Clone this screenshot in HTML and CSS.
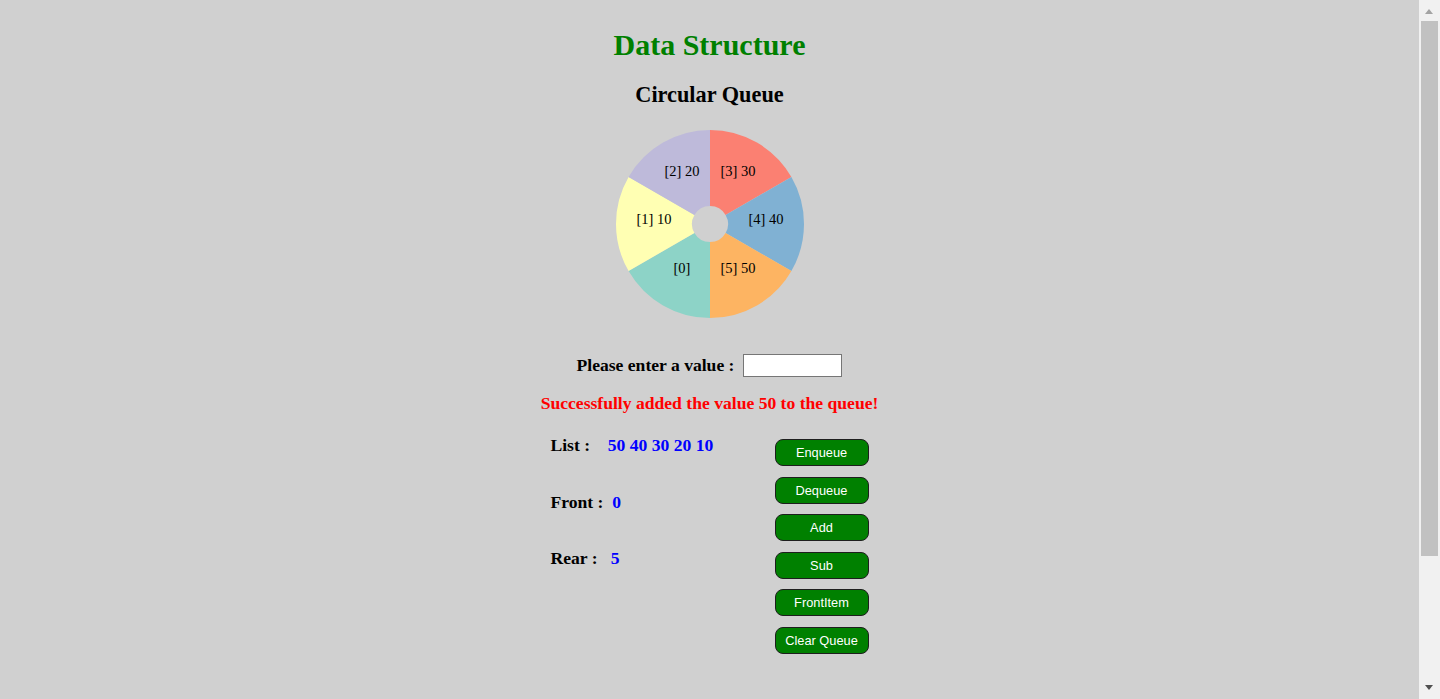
FILE: index.html
```html
<!DOCTYPE html>
<html lang="en">
<head>
<meta charset="utf-8">
<title>Data Structure - Circular Queue</title>
<link rel="stylesheet" href="styles.css">
</head>
<body>
<div class="page">
  <h1 class="title">Data Structure</h1>
  <h2 class="subtitle">Circular Queue</h2>
  <svg class="pie" width="200" height="200" viewBox="0 0 200 200">
    <path fill="#fb8072" d="M100,6 A94,94 0 0 1 181.41,53 L115.59,91 A18,18 0 0 0 100,82 Z"/>
    <path fill="#80b1d3" d="M181.41,53 A94,94 0 0 1 181.41,147 L115.59,109 A18,18 0 0 0 115.59,91 Z"/>
    <path fill="#fdb462" d="M181.41,147 A94,94 0 0 1 100,194 L100,118 A18,18 0 0 0 115.59,109 Z"/>
    <path fill="#8dd3c7" d="M100,194 A94,94 0 0 1 18.59,147 L84.41,109 A18,18 0 0 0 100,118 Z"/>
    <path fill="#ffffb3" d="M18.59,147 A94,94 0 0 1 18.59,53 L84.41,91 A18,18 0 0 0 84.41,109 Z"/>
    <path fill="#bebada" d="M18.59,53 A94,94 0 0 1 100,6 L100,82 A18,18 0 0 0 84.41,91 Z"/>
    <text class="slice-label" x="128" y="51.5">[3] 30</text>
    <text class="slice-label" x="156" y="100">[4] 40</text>
    <text class="slice-label" x="128" y="148.5">[5] 50</text>
    <text class="slice-label" x="72" y="148.5">[0]</text>
    <text class="slice-label" x="44" y="100">[1] 10</text>
    <text class="slice-label" x="72" y="51.5">[2] 20</text>
  </svg>
  <div class="input-row">
    <label class="input-label" for="val">Please enter a value :</label>
    <input class="value-input" id="val" type="text">
  </div>
  <p class="message">Successfully added the value 50 to the queue!</p>
  <div class="panel">
    <div class="info">
      <div class="info-row"><span class="info-label">List :&nbsp;&nbsp;&nbsp;&nbsp;</span><span class="info-value">50 40 30 20 10</span></div>
      <div class="info-row"><span class="info-label">Front :&nbsp;&nbsp;</span><span class="info-value">0</span></div>
      <div class="info-row"><span class="info-label">Rear :&nbsp;&nbsp;&nbsp;</span><span class="info-value">5</span></div>
    </div>
    <div class="buttons">
      <button class="btn" type="button">Enqueue</button>
      <button class="btn" type="button">Dequeue</button>
      <button class="btn" type="button">Add</button>
      <button class="btn" type="button">Sub</button>
      <button class="btn" type="button">FrontItem</button>
      <button class="btn" type="button">Clear Queue</button>
    </div>
  </div>
</div>
<div class="scrollbar" aria-hidden="true">
  <div class="scroll-arrow scroll-up"></div>
  <div class="scroll-thumb"></div>
  <div class="scroll-arrow scroll-down"></div>
</div>
</body>
</html>
```

FILE: styles.css
```css
html {
  background: #d0d0d0;
}

body {
  margin: 0;
  min-height: 858px;
  background: #d0d0d0;
  font-family: "Liberation Serif", "Times New Roman", serif;
  color: #000;
}

.page {
  display: flex;
  flex-direction: column;
  align-items: center;
  padding-top: 27px;
  padding-right: 21px;
}

.title {
  margin: 0;
  font-size: 30px;
  line-height: 36px;
  font-weight: bold;
  color: #008000;
}

.subtitle {
  margin: 19px 0 0;
  font-size: 22.3px;
  line-height: 26px;
  font-weight: bold;
}

.pie {
  display: block;
  margin-top: 16px;
}

.slice-label {
  font-family: "Liberation Serif", "Times New Roman", serif;
  font-size: 14.5px;
  fill: #000;
  text-anchor: middle;
}

.input-row {
  display: flex;
  align-items: center;
  margin-top: 30px;
  height: 23px;
}

.input-label {
  font-size: 17.6px;
  font-weight: bold;
  line-height: 23px;
}

.value-input {
  box-sizing: border-box;
  width: 99px;
  height: 23px;
  margin: 0 0 0 9px;
  padding: 1px 2px;
  border: 1px solid #767676;
  background: #fff;
  font-family: "Liberation Sans", Arial, sans-serif;
  font-size: 13px;
}

.message {
  margin: 16px 0 0;
  font-size: 17.6px;
  line-height: 20px;
  font-weight: bold;
  color: #ff0000;
}

.panel {
  display: flex;
  justify-content: space-between;
  width: 318px;
  margin-top: 22px;
}

.info {
  display: flex;
  flex-direction: column;
  gap: 36.5px;
}

.info-row {
  font-size: 17.6px;
  line-height: 20px;
  font-weight: bold;
  white-space: nowrap;
}

.info-value {
  color: #0000ff;
}

.buttons {
  display: flex;
  flex-direction: column;
  gap: 10.5px;
  padding-top: 4.3px;
}

.btn {
  box-sizing: border-box;
  width: 94px;
  height: 27px;
  margin: 0;
  padding: 0;
  border: 1px solid #1e1e1e;
  border-radius: 8px;
  background: #008000;
  color: #fff;
  font-family: "Liberation Sans", Arial, sans-serif;
  font-size: 12.8px;
  line-height: 25px;
  text-align: center;
  cursor: pointer;
}

/* browser-style vertical scrollbar drawn over the right edge */
.scrollbar {
  position: fixed;
  top: 0;
  right: 0;
  bottom: 0;
  width: 21px;
  background: #f1f1f1;
}

.scroll-thumb {
  position: absolute;
  top: 21px;
  left: 2px;
  width: 17px;
  height: 535px;
  background: #c1c1c1;
}

.scroll-arrow {
  position: absolute;
  left: 6px;
  width: 0;
  height: 0;
  border-left: 4.5px solid transparent;
  border-right: 4.5px solid transparent;
}

.scroll-up {
  top: 9px;
  border-bottom: 5px solid #a3a3a3;
}

.scroll-down {
  bottom: 9px;
  border-top: 5px solid #505050;
}
```
